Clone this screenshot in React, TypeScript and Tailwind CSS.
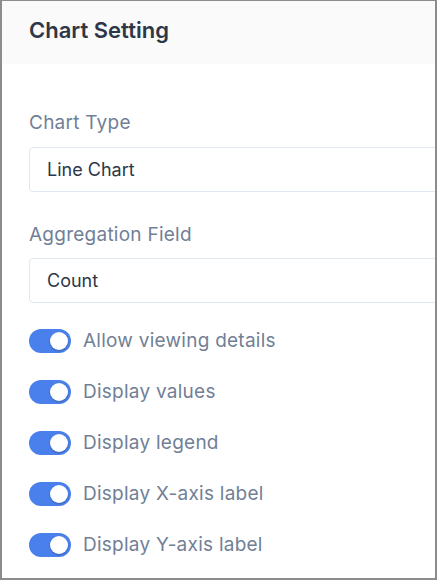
import React from "react";

const toggles = [
  "Allow viewing details",
  "Display values",
  "Display legend",
  "Display X-axis label",
  "Display Y-axis label",
];

function Toggle() {
  return (
    <div className="relative h-[24px] w-[42px] shrink-0 rounded-full bg-[#4a80ec]">
      <div className="absolute right-[3px] top-[3px] h-[18px] w-[18px] rounded-full bg-white shadow-[0_1px_2px_rgba(0,0,0,0.25)]" />
    </div>
  );
}

export default function App() {
  return (
    <div
      className="h-[581px] w-[437px] bg-white"
      style={{ fontFamily: "Inter, Roboto, 'Noto Sans', sans-serif" }}
    >
      <div className="flex h-[580px] w-[437px] flex-col overflow-hidden border-x-2 border-b-2 border-t border-[#8c8c8c] bg-white">
        <div className="flex h-[63px] shrink-0 items-start bg-[#fafafa] pl-[27px] pt-[15px]">
          <h1 className="text-[22px] font-semibold leading-[28px] text-[#2d3748]">
            Chart Setting
          </h1>
        </div>
        <div className="flex flex-col pl-[27px] pt-[45px]">
          <div className="text-[19px] leading-[28px] tracking-[0.25px] text-[#718096]">
            Chart Type
          </div>
          <div className="mt-[10px] flex h-[45px] w-[440px] items-center rounded-[4px] border border-[#e2e8f0] pl-[17px] text-[18px] leading-[28px] text-[#2d3748]">
            Line Chart
          </div>
          <div className="mt-[29px] text-[19px] leading-[28px] tracking-[0.25px] text-[#718096]">
            Aggregation Field
          </div>
          <div className="mt-[9px] flex h-[45px] w-[440px] items-center rounded-[4px] border border-[#e2e8f0] pl-[17px] text-[18px] leading-[28px] text-[#2d3748]">
            Count
          </div>
          <div className="mt-[24px] flex flex-col gap-[23px]">
            {toggles.map((t) => (
              <div key={t} className="flex h-[28px] items-center gap-[12px]">
                <Toggle />
                <span className="text-[19px] leading-[28px] tracking-[0.25px] text-[#718096]">
                  {t}
                </span>
              </div>
            ))}
          </div>
        </div>
      </div>
    </div>
  );
}
